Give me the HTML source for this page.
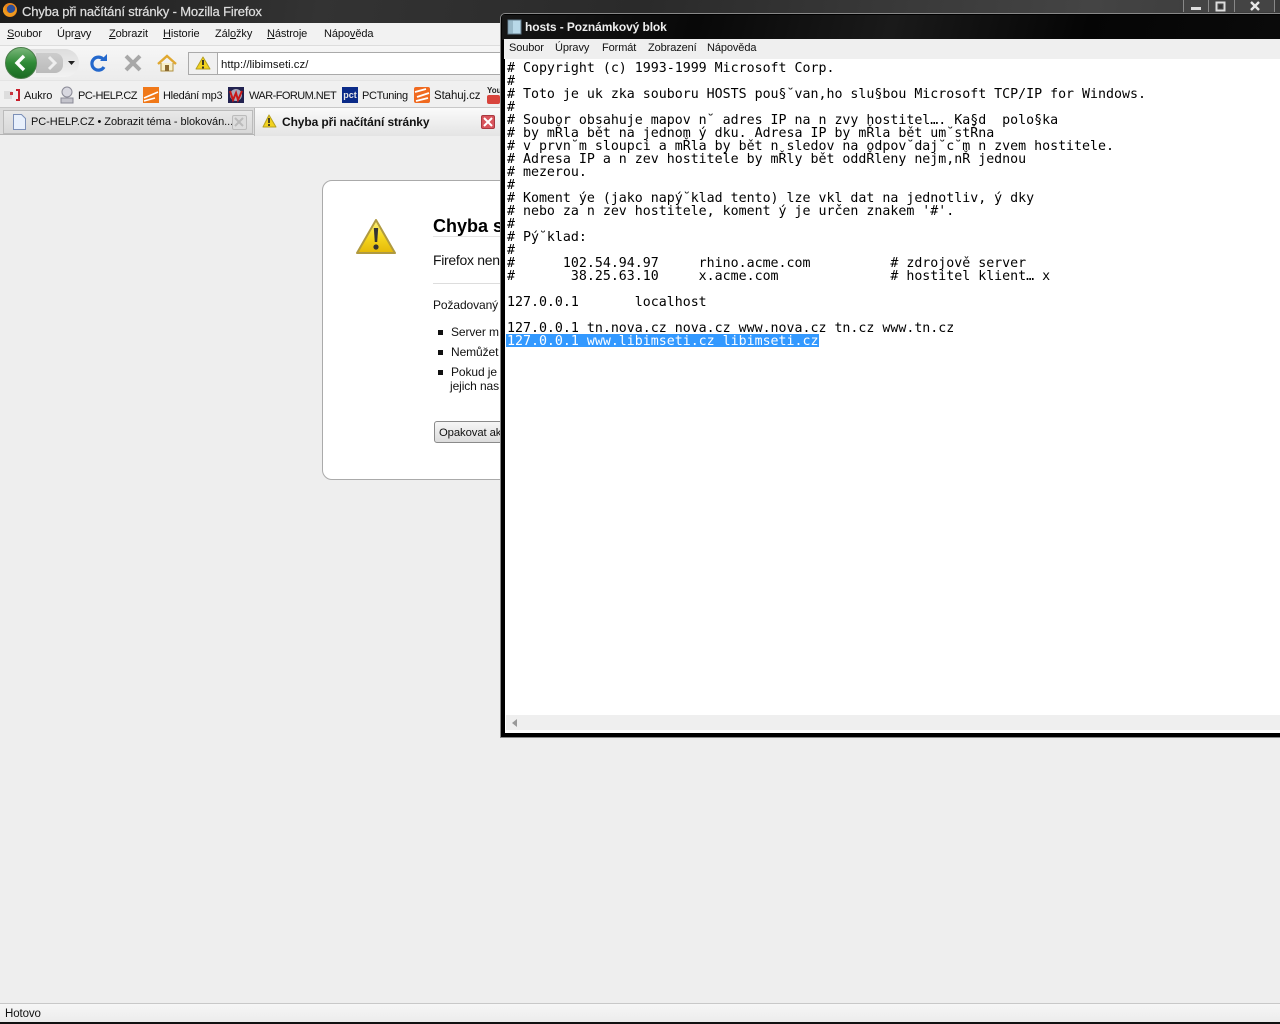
<!DOCTYPE html>
<html lang="cs"><head><meta charset="utf-8"><title>Chyba při načítání stránky - Mozilla Firefox</title>
<style>
html,body{margin:0;padding:0;width:1280px;height:1024px;overflow:hidden;background:#eee}
body{position:relative;font-family:"Liberation Sans","DejaVu Sans",sans-serif;font-size:11px;color:#111}
.a{position:absolute;white-space:nowrap}
.t{position:absolute;white-space:nowrap;line-height:14px;letter-spacing:-.1px}
.e{font-size:12px}
u{text-decoration:underline}
svg{position:absolute;overflow:visible}
pre{position:absolute;margin:0;font-family:"DejaVu Sans Mono","Liberation Mono",monospace;font-size:13.28px;line-height:13px;color:#000}
</style></head><body>
<!-- Firefox title -->
<div class="a" style="left:0;top:0;width:1280px;height:23px;background:linear-gradient(100deg,#1c1c1c 0,#333 25%,#2a2a2a 50%,#444 85%,#3a3a3a 100%)"></div>
<svg style="left:2px;top:2px" width="16" height="16" viewBox="0 0 16 16"><circle cx="8" cy="8" r="7" fill="#e8861c"/><circle cx="9" cy="7" r="4.2" fill="#2c4f9a"/><path d="M1 9c1 5 7 7 11 4 2-2 3-4 2-7-1 3-3 5-6 5S3 10 3 4C1 5 1 7 1 9z" fill="#ef9a1f"/></svg>
<div class="t" style="left:22px;top:5px;color:#ddd;font-size:13px;letter-spacing:-.15px;-webkit-text-stroke:.25px #ddd">Chyba při načítání stránky - Mozilla Firefox</div>
<!-- Menu -->
<div class="a" style="left:0;top:23px;width:500px;height:22px;background:#f2f2f2;border-bottom:1px solid #ddd"></div>
<div class="t" style="left:7px;top:27px"><u>S</u>oubor</div>
<div class="t" style="left:57px;top:27px">Úpr<u>a</u>vy</div>
<div class="t" style="left:109px;top:27px"><u>Z</u>obrazit</div>
<div class="t" style="left:163px;top:27px"><u>H</u>istorie</div>
<div class="t" style="left:215px;top:27px">Zál<u>o</u>žky</div>
<div class="t" style="left:267px;top:27px"><u>N</u>ástroje</div>
<div class="t" style="left:324px;top:27px">Nápo<u>v</u>ěda</div>
<!-- Nav toolbar -->
<div class="a" style="left:0;top:46px;width:500px;height:34px;background:linear-gradient(#f6f6f6,#ececec)"></div>
<div class="a" style="left:20px;top:49px;width:59px;height:28px;border-radius:0 14px 14px 0;background:linear-gradient(#ddd,#f2f2f2)"></div>
<div class="a" style="left:36px;top:53px;width:27px;height:20px;border-radius:0 8px 8px 0;background:linear-gradient(#ccc,#bbb)"></div>
<svg style="left:5px;top:47px" width="34" height="33" viewBox="0 0 34 33"><defs><linearGradient id="g1" x1="0" y1="0" x2="0" y2="1"><stop offset="0" stop-color="#7cb87c"/><stop offset=".5" stop-color="#2f8a36"/><stop offset="1" stop-color="#1a6a22"/></linearGradient></defs><circle cx="16" cy="16" r="15.5" fill="url(#g1)" stroke="#4a7d4a"/><path d="M19 9l-7 7 7 7" fill="none" stroke="#fff" stroke-width="3.4"/></svg>
<svg style="left:46px;top:56px" width="12" height="14"><path d="M3 1l6 6-6 6" fill="none" stroke="#eee" stroke-width="3"/></svg>
<svg style="left:68px;top:61px" width="8" height="5"><path d="M0 0h7L3.500 4z" fill="#222"/></svg>
<svg style="left:90px;top:53px" width="18" height="20" viewBox="0 0 18 20"><path d="M14 14a6.500 6.500 0 1 1-1-8" fill="none" stroke="#2468cc" stroke-width="3.200"/><path d="M10 8h7V1z" fill="#2468cc"/></svg>
<svg style="left:124px;top:54px" width="18" height="18"><path d="M2 2l14 14M16 2L2 16" stroke="#a8a8a8" stroke-width="4"/></svg>
<svg style="left:157px;top:54px" width="20" height="18" viewBox="0 0 20 18"><path d="M4 9v8h12V9" fill="#f8efc8" stroke="#b09040"/><path d="M1 10l9-8 9 8" fill="none" stroke="#e0a830" stroke-width="2.400"/><rect x="8" y="11" width="4" height="6" fill="#8a6a30"/></svg>
<div class="a" style="left:188px;top:52px;width:320px;height:21px;border:1px solid #aaa;background:#fff"></div>
<div class="a" style="left:189px;top:53px;width:28px;height:21px;background:#f0f0f0;border-right:1px solid #aaa"></div>
<svg style="left:195px;top:56px" width="16" height="14"><path d="M8 1l7 12H1z" fill="#f2d21e" stroke="#b5a020" stroke-linejoin="round"/><path d="M8 4v5M8 10.500v2" stroke="#222" stroke-width="1.800"/></svg>
<div class="t" style="left:221px;top:58px;font-size:11.4px;letter-spacing:0">http://libimseti.cz/</div>
<!-- Bookmarks -->
<div class="a" style="left:0;top:80px;width:500px;height:27px;background:#f0f0f0;border-top:1px solid #e4e4e4"></div>
<svg style="left:4px;top:89px" width="16" height="12"><rect x="0" y="2" width="8" height="8" fill="#ddd"/><rect x="6" y="3" width="3" height="3" fill="#c9343c"/><path d="M12 1h3v10h-3" fill="none" stroke="#c8202c" stroke-width="2"/></svg>
<div class="t" style="left:24px;top:89px">Aukro</div>
<svg style="left:59px;top:86px" width="16" height="18"><circle cx="8" cy="6" r="5" fill="#d8d8e0" stroke="#8a8a96"/><rect x="2" y="12" width="12" height="5" fill="#c4c4cc" stroke="#8a8a96"/></svg>
<div class="t" style="left:78px;top:89px;letter-spacing:-.5px">PC-HELP.CZ</div>
<svg style="left:143px;top:87px" width="16" height="16"><rect width="16" height="16" fill="#f07818"/><path d="M1 11L15 5M1 14l11-3" stroke="#fff" stroke-width="1.500"/></svg>
<div class="t" style="left:163px;top:89px;letter-spacing:-.28px">Hledání mp3</div>
<svg style="left:228px;top:87px" width="16" height="16"><rect width="16" height="16" fill="#222250"/><circle cx="8" cy="8" r="6" fill="#aab"/><path d="M2 4l3 9 3-7 2 7 4-9" fill="none" stroke="#c81818" stroke-width="2"/></svg>
<div class="t" style="left:249px;top:89px;letter-spacing:-.55px">WAR-FORUM.NET</div>
<div class="a" style="left:342px;top:87px;width:16px;height:16px;background:#0a2a88"></div>
<div class="a" style="left:342px;top:91px;width:16px;font:700 9px/9px 'Liberation Sans',sans-serif;color:#e8e8e8;text-align:center">pct</div>
<div class="t" style="left:362px;top:89px;letter-spacing:-.35px">PCTuning</div>
<svg style="left:414px;top:87px" width="16" height="16"><rect width="16" height="16" rx="2" fill="#f06a20"/><path d="M1 5L12 2M3 10l12-4M2 14l12-3" stroke="#fff" stroke-width="1.800"/></svg>
<div class="t" style="left:434px;top:89px;font-size:11.5px">Stahuj.cz</div>
<div class="a" style="left:487px;top:87px;font:700 8px/8px 'Liberation Sans',sans-serif;color:#222">You</div>
<div class="a" style="left:487px;top:95px;width:13px;height:9px;background:#d8443c;border-radius:2px"></div>
<!-- Tabs -->
<div class="a" style="left:0;top:107px;width:500px;height:28px;background:#dcdcdc;border-top:1px solid #c8c8c8;border-bottom:1px solid #b4b4b4;box-sizing:border-box"></div>
<div class="a" style="left:3px;top:110px;width:250px;height:24px;background:linear-gradient(#e8e8e8,#d8d8d8);border:1px solid #bbb;box-sizing:border-box"></div>
<div class="a" style="left:254px;top:108px;width:246px;height:28px;background:linear-gradient(#fafafa,#e4e4e4);border-left:1px solid #bbb;box-sizing:border-box"></div>
<svg style="left:13px;top:114px" width="13" height="16"><path d="M.5.500h8l4 4v11H.500z" fill="#e8f0fc" stroke="#7c90b8"/></svg>
<div class="t" style="left:31px;top:115px;letter-spacing:-.05px">PC-HELP.CZ • Zobrazit téma - blokován...</div>
<div class="a" style="left:232px;top:115px;width:13px;height:13px;background:#ddd;border:1px solid #bbb;border-radius:2px"></div>
<svg style="left:234px;top:117px" width="10" height="10"><path d="M1 1l8 8M9 1L1 9" stroke="#bbb" stroke-width="2"/></svg>
<svg style="left:262px;top:114px" width="16" height="14"><path d="M7 1l7 12H1z" fill="#f2d21e" stroke="#b5a020" stroke-linejoin="round"/><path d="M7 4v5M7 10v2" stroke="#222" stroke-width="1.600"/></svg>
<div class="t e" style="left:282px;top:115px;font-weight:700;letter-spacing:-.1px">Chyba při načítání stránky</div>
<div class="a" style="left:481px;top:115px;width:14px;height:14px;background:#d8545c;border:1px solid #a83840;border-radius:2px;box-sizing:border-box"></div>
<svg style="left:483px;top:117px" width="10" height="10"><path d="M1 1l8 8M9 1L1 9" stroke="#fff" stroke-width="2"/></svg>
<!-- Error page -->
<div class="a" style="left:322px;top:180px;width:400px;height:300px;background:#fff;border:1px solid #aaa;border-radius:10px;box-sizing:border-box"></div>
<svg style="left:355px;top:218px" width="42" height="38" viewBox="0 0 42 38"><defs><linearGradient id="y" x1="0" y1="0" x2="0" y2="1"><stop offset="0" stop-color="#fbf080"/><stop offset=".5" stop-color="#f6d820"/><stop offset="1" stop-color="#e4b808"/></linearGradient></defs><path d="M21 2L40 35H2z" fill="url(#y)" stroke="#b09a40" stroke-width="2" stroke-linejoin="round"/><path d="M18.800 10h4.400l-1 14h-2.400z" fill="#333"/><circle cx="21" cy="29" r="2.600" fill="#333"/></svg>
<div class="a" style="left:433px;top:215px;font:700 18px/22px 'Liberation Sans',sans-serif;color:#000">Chyba s</div>
<div class="a" style="left:433px;top:236px;width:70px;height:1px;background:#e4e4e4"></div>
<div class="a" style="left:433px;top:252px;font:14px/16px 'Liberation Sans',sans-serif;letter-spacing:-.3px">Firefox nen</div>
<div class="a" style="left:433px;top:283px;width:70px;height:1px;background:#ddd"></div>
<div class="t e" style="left:433px;top:298px">Požadovaný</div>
<div class="a" style="left:438px;top:330px;width:5px;height:5px;background:#111"></div>
<div class="t e" style="left:451px;top:325px">Server m</div>
<div class="a" style="left:438px;top:350px;width:5px;height:5px;background:#111"></div>
<div class="t e" style="left:451px;top:345px">Nemůžet</div>
<div class="a" style="left:438px;top:370px;width:5px;height:5px;background:#111"></div>
<div class="t e" style="left:451px;top:365px">Pokud je</div>
<div class="t e" style="left:450px;top:379px">jejich nas</div>
<div class="a" style="left:434px;top:421px;width:80px;height:22px;border:1px solid #8a8a8a;border-radius:3px;background:linear-gradient(#f6f6f6,#dcdcdc);box-sizing:border-box"></div>
<div class="t" style="left:439px;top:426px;font-size:11.3px">Opakovat ak</div>
<!-- Status -->
<div class="a" style="left:0;top:1003px;width:1280px;height:19px;background:linear-gradient(#f6f6f6,#ececec);border-top:1px solid #c8c8c8;box-sizing:border-box"></div>
<div class="a" style="left:0;top:1022px;width:1280px;height:2px;background:#111"></div>
<div class="t" style="left:5px;top:1007px;font-size:11.5px">Hotovo</div>
<!-- Window buttons -->
<div class="a" style="left:1183px;top:0;width:92px;height:12px;background:#444"></div>
<div class="a" style="left:1183px;top:0;width:1px;height:12px;background:#888"></div>
<div class="a" style="left:1208px;top:0;width:1px;height:12px;background:#888"></div>
<div class="a" style="left:1234px;top:0;width:1px;height:12px;background:#888"></div>
<div class="a" style="left:1274px;top:0;width:1px;height:12px;background:#888"></div>
<div class="a" style="left:1191px;top:7px;width:10px;height:3px;background:#ddd"></div>
<svg style="left:1215px;top:1px" width="12" height="11"><rect x="1.500" y="1.500" width="8" height="8" fill="none" stroke="#ddd" stroke-width="2"/><rect x="4" y="4" width="3" height="3" fill="#333"/></svg>
<svg style="left:1250px;top:1px" width="11" height="10"><path d="M1 1l8 8M9 1L1 9" stroke="#e8e8e8" stroke-width="2.400"/></svg>
<!-- Notepad -->
<div class="a" style="left:500px;top:13px;width:790px;height:725px;background:#000;border:1px solid #888;border-radius:5px 5px 0 0;box-sizing:border-box"></div>
<div class="a" style="left:502px;top:15px;width:778px;height:25px;background:linear-gradient(105deg,#161616 0,#080808 25%,#1a1a1a 50%,#050505 75%,#0a0a0a 100%)"></div>
<svg style="left:507px;top:19px" width="16" height="16"><rect x="1" y="1" width="13" height="14" fill="#b8d8e8" stroke="#607888"/><path d="M3 1v14M5 1v14" stroke="#7898a8"/></svg>
<div class="a" style="left:525px;top:19px;font:700 12px/16px 'Liberation Sans',sans-serif;color:#eee;letter-spacing:-.1px">hosts - Poznámkový blok</div>
<div class="a" style="left:504px;top:39px;width:776px;height:20px;background:#efefef"></div>
<div class="t" style="left:509px;top:41px">Soubor</div>
<div class="t" style="left:555px;top:41px">Úpravy</div>
<div class="t" style="left:602px;top:41px">Formát</div>
<div class="t" style="left:648px;top:41px">Zobrazení</div>
<div class="t" style="left:707px;top:41px">Nápověda</div>
<div class="a" style="left:505px;top:59px;width:775px;height:674px;background:#fff"></div>
<div class="a" style="left:506px;top:334px;width:313px;height:13px;background:#3399ff"></div>
<pre style="left:507px;top:62px"># Copyright (c) 1993-1999 Microsoft Corp.
#
# Toto je uk zka souboru HOSTS pou§˘van,ho slu§bou Microsoft TCP/IP for Windows.
#
# Soubor obsahuje mapov n˘ adres IP na n zvy hostitel…. Ka§d  polo§ka
# by mŘla bět na jednom ý dku. Adresa IP by mŘla bět um˘stŘna
# v prvn˘m sloupci a mŘla by bět n sledov na odpov˘daj˘c˘m n zvem hostitele.
# Adresa IP a n zev hostitele by mŘly bět oddŘleny nejm,nŘ jednou
# mezerou.
#
# Koment ýe (jako napý˘klad tento) lze vkl dat na jednotliv, ý dky
# nebo za n zev hostitele, koment ý je určen znakem '#'.
#
# Pý˘klad:
#
#      102.54.94.97     rhino.acme.com          # zdrojově server
#       38.25.63.10     x.acme.com              # hostitel klient… x

127.0.0.1       localhost

127.0.0.1 tn.nova.cz nova.cz www.nova.cz tn.cz www.tn.cz
<span style="color:#fff">127.0.0.1 www.libimseti.cz libimseti.cz</span></pre>
<div class="a" style="left:506px;top:715px;width:774px;height:15px;background:#efefef"></div>
<svg style="left:512px;top:719px" width="6" height="8"><path d="M5 0v8L0 4z" fill="#999"/></svg>
</body></html>
